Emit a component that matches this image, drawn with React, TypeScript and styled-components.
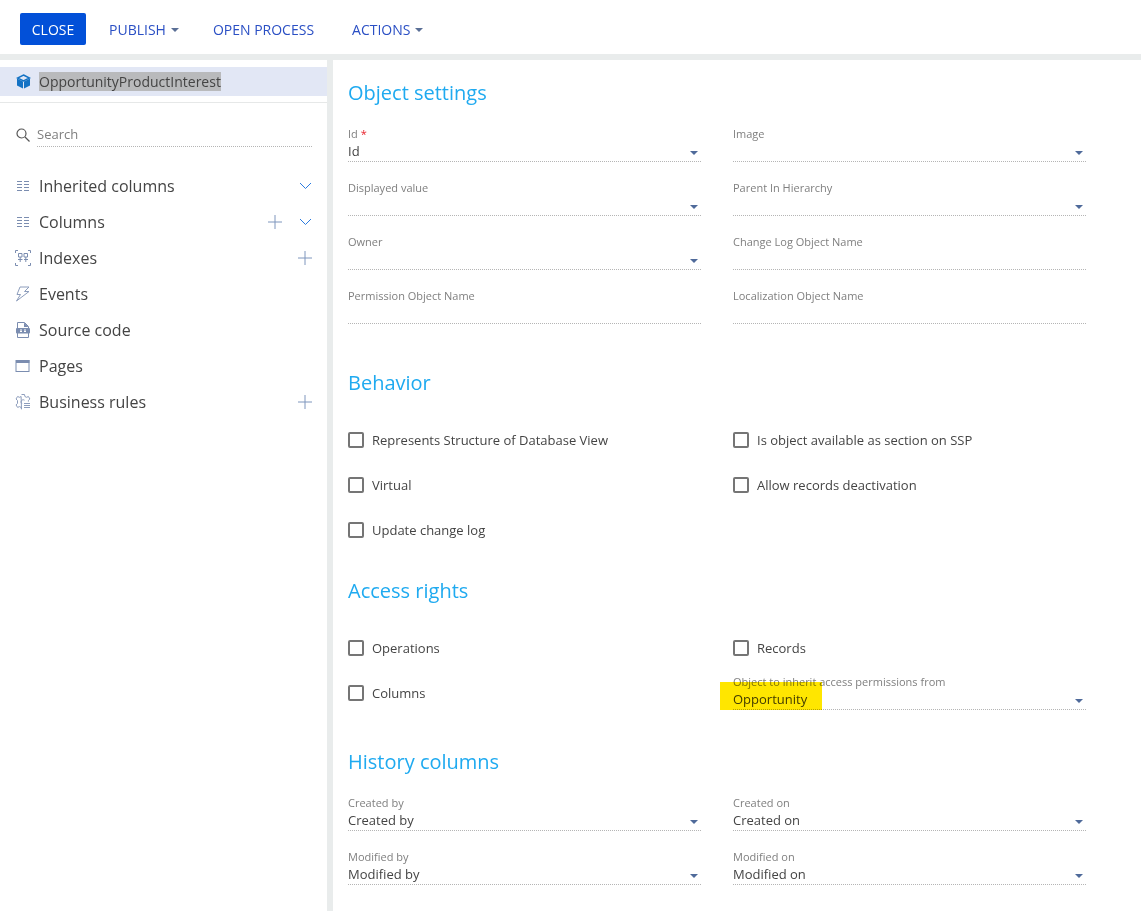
import styled, { createGlobalStyle } from "styled-components";

const GlobalStyle = createGlobalStyle`
  html, body {
    margin: 0;
    padding: 0;
    background: #fff;
    font-family: "Open Sans", "Liberation Sans", sans-serif;
  }
`;

const Page = styled.div`
  width: 1141px;
  height: 911px;
  overflow: hidden;
  display: flex;
  flex-direction: column;
  background: #e9ecec;
`;

const Toolbar = styled.div`
  height: 54px;
  flex: none;
  background: #fff;
  display: flex;
  align-items: flex-start;
  padding: 13px 0 0 20px;
  box-sizing: border-box;
`;

const CloseButton = styled.button`
  width: 66px;
  height: 32px;
  margin-right: 23px;
  padding: 0;
  border: 0;
  border-radius: 2px;
  background: #0250d8;
  color: #fff;
  font: 14px "Open Sans", sans-serif;
`;

const MenuButton = styled.div<{ $gap: number }>`
  height: 32px;
  margin-right: ${(p) => p.$gap}px;
  display: flex;
  align-items: center;
  color: #2a4fc4;
  font-size: 14px;
`;

const Caret = styled.span`
  width: 0;
  height: 0;
  margin-left: 5px;
  margin-top: 2px;
  border-left: 4px solid transparent;
  border-right: 4px solid transparent;
  border-top: 4px solid #5a6f96;
`;

const Body = styled.div`
  flex: 1;
  margin-top: 6px;
  display: flex;
  gap: 6px;
  min-height: 0;
`;

const Sidebar = styled.aside`
  width: 327px;
  flex: none;
  background: #fff;
  padding-top: 7px;
  box-sizing: border-box;
`;

const ObjectRow = styled.div`
  height: 29px;
  background: #e2e7f5;
  display: flex;
  align-items: center;
  padding-left: 16px;
`;

const ObjectName = styled.span`
  margin-left: 8px;
  height: 19px;
  line-height: 19px;
  background: #b9babc;
  color: #444;
  font-size: 14px;
`;

const Divider = styled.div`
  height: 1px;
  margin-top: 6px;
  background: #e6e8e8;
`;

const SearchRow = styled.div`
  margin-top: 21px;
  display: flex;
  align-items: flex-start;
  padding-left: 16px;
`;

const SearchField = styled.div`
  width: 275px;
  margin-left: 7px;
  height: 23px;
  line-height: 20px;
  color: #7f7f7f;
  font-size: 13px;
  border-bottom: 1px dotted #b5b5b5;
  box-sizing: border-box;
`;

const SearchIcon = styled.svg`
  margin-top: 4px;
  flex: none;
`;

const Nav = styled.nav`
  margin-top: 21px;
`;

const NavRow = styled.div`
  height: 36px;
  display: flex;
  align-items: center;
  padding: 0 15px;
  color: #444;
  font-size: 16px;
`;

const NavIcon = styled.svg`
  flex: none;
  margin-right: 8px;
`;

const NavLabel = styled.span`
  flex: 1;
`;

const RowAction = styled.svg`
  flex: none;
  margin-left: 17px;
`;

const Content = styled.main`
  flex: 1;
  background: #fff;
  padding: 19px 0 0 15px;
  box-sizing: border-box;
`;

const SectionTitle = styled.h2<{ $top: number; $bottom: number }>`
  margin: ${(p) => p.$top}px 0 ${(p) => p.$bottom}px;
  height: 28px;
  line-height: 28px;
  color: #1faaf0;
  font-size: 20px;
  font-weight: 400;
`;

const TwoCols = styled.div`
  width: 738px;
  display: grid;
  grid-template-columns: 353px 353px;
  column-gap: 32px;
`;

const Field = styled.div`
  position: relative;
  height: 54px;
  box-sizing: border-box;
  padding-top: 4px;
`;

const FieldBox = styled.div`
  height: 36px;
  box-sizing: border-box;
  border-bottom: 1px dotted #b5b5b5;
  position: relative;
`;

const FieldLabel = styled.div`
  height: 16px;
  line-height: 16px;
  color: #7f7f7f;
  font-size: 11px;
`;

const Required = styled.span`
  color: #e8212b;
  margin-left: 3px;
`;

const FieldValue = styled.div`
  height: 19px;
  line-height: 19px;
  color: #444;
  font-size: 13px;
`;

const SelectCaret = styled.span`
  position: absolute;
  right: 3px;
  bottom: 6px;
  width: 0;
  height: 0;
  border-left: 4px solid transparent;
  border-right: 4px solid transparent;
  border-top: 4px solid #4f6a9a;
`;

const Highlight = styled.span`
  position: absolute;
  left: -13px;
  top: 8px;
  width: 102px;
  height: 28px;
  background: #ffe600;
  mix-blend-mode: multiply;
`;

const CheckRow = styled.div`
  height: 45px;
  display: flex;
  align-items: center;
  color: #444;
  font-size: 13px;
`;

const CheckBox = styled.span<{ $checked?: boolean }>`
  width: 16px;
  height: 16px;
  margin-right: 8px;
  flex: none;
  box-sizing: border-box;
  border-radius: 2px;
  display: flex;
  align-items: center;
  justify-content: center;
  border: ${(p) => (p.$checked ? "none" : "2px solid #757575")};
  background: ${(p) => (p.$checked ? "#0250d8" : "#fff")};
`;

const ColumnsIcon = () => (
  <NavIcon width="16" height="16" viewBox="0 0 16 16" fill="none" stroke="#7b8db0" strokeWidth="1">
    <path d="M2 3.5h5M2 6.5h5M2 9.5h5M2 12.5h5M9 3.5h5M9 6.5h5M9 9.5h5M9 12.5h5" />
  </NavIcon>
);

const IndexIcon = () => (
  <NavIcon width="16" height="16" viewBox="0 0 16 16" fill="none" stroke="#7b8db0" strokeWidth="1">
    <path d="M.5 3V.5H3M13 .5h2.5V3M.5 13v2.5H3M13 15.500h2.500V13" />
    <path d="M3.500 3.500h3.500v3.500H3.500zM9 3.500h3.500v3.500H9zM3 9.500h4.500M9 9.500h4M5.200 7v5M10.800 7v5" />
  </NavIcon>
);

const EventsIcon = () => (
  <NavIcon width="16" height="16" viewBox="0 0 16 16" fill="none" stroke="#8d9dbc" strokeWidth="1">
    <path d="M5 1h9L9.500 5.500H14L1.500 15 5.500 8.500H2z" />
  </NavIcon>
);

const SourceIcon = () => (
  <NavIcon width="16" height="16" viewBox="0 0 16 16">
    <path d="M2.500.5h7L13.500 4.500v11h-11z" fill="#fff" stroke="#7b8db0" />
    <path d="M9 .5l4.500 4.500H9z" fill="#7b8db0" />
    <rect x="1" y="6" width="14" height="5.500" rx="1" fill="#7b8db0" />
    <path d="M5 8h2M5 9.500h2M9 8h2M9 9.500h2" stroke="#fff" />
  </NavIcon>
);

const PagesIcon = () => (
  <NavIcon width="16" height="16" viewBox="0 0 16 16" fill="none">
    <rect x="1" y="2.500" width="13" height="11" stroke="#7b8db0" />
    <rect x="1" y="2" width="13.500" height="3" fill="#7b8db0" />
  </NavIcon>
);

const RulesIcon = () => (
  <NavIcon width="16" height="16" viewBox="0 0 16 16" fill="none" stroke="#8d9dbc" strokeWidth="1">
    <path d="M6.500.500h3l.4 2 1.600.800 1.900-.800 1.500 2.500-1.500 1.400v1.200M6.500 15.200l-.4-1.800-1.600-.8-1.900.8L1 10.900l1.500-1.400V6.500L1 5l1.600-2.500 1.900.8 1.600-.8z" />
    <path d="M9 9.500h6M9 11.500h6M9 13.500h6M6 8a2.200 2.200 0 0 1 3.500-1.800M6 8a2.200 2.200 0 0 0 1 1.800" />
  </NavIcon>
);

const Plus = () => (
  <RowAction width="14" height="14" viewBox="0 0 14 14" stroke="#7f96bd" strokeWidth="1">
    <path d="M7 0v14M0 7h14" />
  </RowAction>
);

const Chevron = () => (
  <RowAction width="13" height="8" viewBox="0 0 13 8" fill="none" stroke="#2a7be0" strokeWidth="1">
    <path d="M1 1l5.500 5.500L12 1" />
  </RowAction>
);

const SelectField = ({
  label,
  value,
  required,
  caret = true,
  highlighted,
}: {
  label: string;
  value?: string;
  required?: boolean;
  caret?: boolean;
  highlighted?: boolean;
}) => (
  <Field>
    <FieldBox>
      <FieldLabel>
        {label}
        {required && <Required>*</Required>}
      </FieldLabel>
      <FieldValue>{value}</FieldValue>
      {caret && <SelectCaret />}
      {highlighted && <Highlight />}
    </FieldBox>
  </Field>
);

const Check = ({ label, checked }: { label: string; checked?: boolean }) => (
  <CheckRow>
    <CheckBox $checked={checked}>
      {checked && (
        <svg width="12" height="10" viewBox="0 0 12 10" fill="none" stroke="#fff" strokeWidth="1.500">
          <path d="M1 5l3.500 3.500L11 1.500" />
        </svg>
      )}
    </CheckBox>
    {label}
  </CheckRow>
);

export default function App() {
  return (
    <Page>
      <GlobalStyle />
      <Toolbar>
        <CloseButton type="button">CLOSE</CloseButton>
        <MenuButton $gap={34}>
          PUBLISH
          <Caret />
        </MenuButton>
        <MenuButton $gap={38}>OPEN PROCESS</MenuButton>
        <MenuButton $gap={0}>
          ACTIONS
          <Caret />
        </MenuButton>
      </Toolbar>
      <Body>
        <Sidebar>
          <ObjectRow>
            <svg width="15" height="15" viewBox="0 0 15 15">
              <path d="M7.500 1l6 3-6 3-6-3z" fill="none" stroke="#1372c4" strokeWidth="1.500" />
              <path d="M1 4.500l6 3v7l-6-3zM14 4.500l-6 3v7l6-3z" fill="#1372c4" />
            </svg>
            <ObjectName>OpportunityProductInterest</ObjectName>
          </ObjectRow>
          <Divider />
          <SearchRow>
            <SearchIcon width="14" height="14" viewBox="0 0 14 14" fill="none" stroke="#555" strokeWidth="1.200">
              <circle cx="5.500" cy="5.500" r="4.500" />
              <path d="M9 9l4.500 4.500" />
            </SearchIcon>
            <SearchField>Search</SearchField>
          </SearchRow>
          <Nav>
            <NavRow>
              <ColumnsIcon />
              <NavLabel>Inherited columns</NavLabel>
              <Chevron />
            </NavRow>
            <NavRow>
              <ColumnsIcon />
              <NavLabel>Columns</NavLabel>
              <Plus />
              <Chevron />
            </NavRow>
            <NavRow>
              <IndexIcon />
              <NavLabel>Indexes</NavLabel>
              <Plus />
            </NavRow>
            <NavRow>
              <EventsIcon />
              <NavLabel>Events</NavLabel>
            </NavRow>
            <NavRow>
              <SourceIcon />
              <NavLabel>Source code</NavLabel>
            </NavRow>
            <NavRow>
              <PagesIcon />
              <NavLabel>Pages</NavLabel>
            </NavRow>
            <NavRow>
              <RulesIcon />
              <NavLabel>Business rules</NavLabel>
              <Plus />
            </NavRow>
          </Nav>
        </Sidebar>
        <Content>
          <SectionTitle $top={0} $bottom={15}>Object settings</SectionTitle>
          <TwoCols>
            <SelectField label="Id" value="Id" required />
            <SelectField label="Image" />
            <SelectField label="Displayed value" />
            <SelectField label="Parent In Hierarchy" />
            <SelectField label="Owner" />
            <SelectField label="Change Log Object Name" caret={false} />
            <SelectField label="Permission Object Name" caret={false} />
            <SelectField label="Localization Object Name" caret={false} />
          </TwoCols>
          <SectionTitle $top={31} $bottom={20}>Behavior</SectionTitle>
          <TwoCols>
            <Check label="Represents Structure of Database View" />
            <Check label="Is object available as section on SSP" />
            <Check label="Virtual" />
            <Check label="Allow records deactivation" />
            <Check label="Update change log" />
          </TwoCols>
          <SectionTitle $top={25} $bottom={20}>Access rights</SectionTitle>
          <TwoCols>
            <Check label="Operations" />
            <Check label="Records" />
            <Check label="Columns" />
            <SelectField label="Object to inherit access permissions from" value="Opportunity" highlighted />
          </TwoCols>
          <SectionTitle $top={24} $bottom={15}>History columns</SectionTitle>
          <TwoCols>
            <SelectField label="Created by" value="Created by" />
            <SelectField label="Created on" value="Created on" />
            <SelectField label="Modified by" value="Modified by" />
            <SelectField label="Modified on" value="Modified on" />
          </TwoCols>
        </Content>
      </Body>
    </Page>
  );
}
